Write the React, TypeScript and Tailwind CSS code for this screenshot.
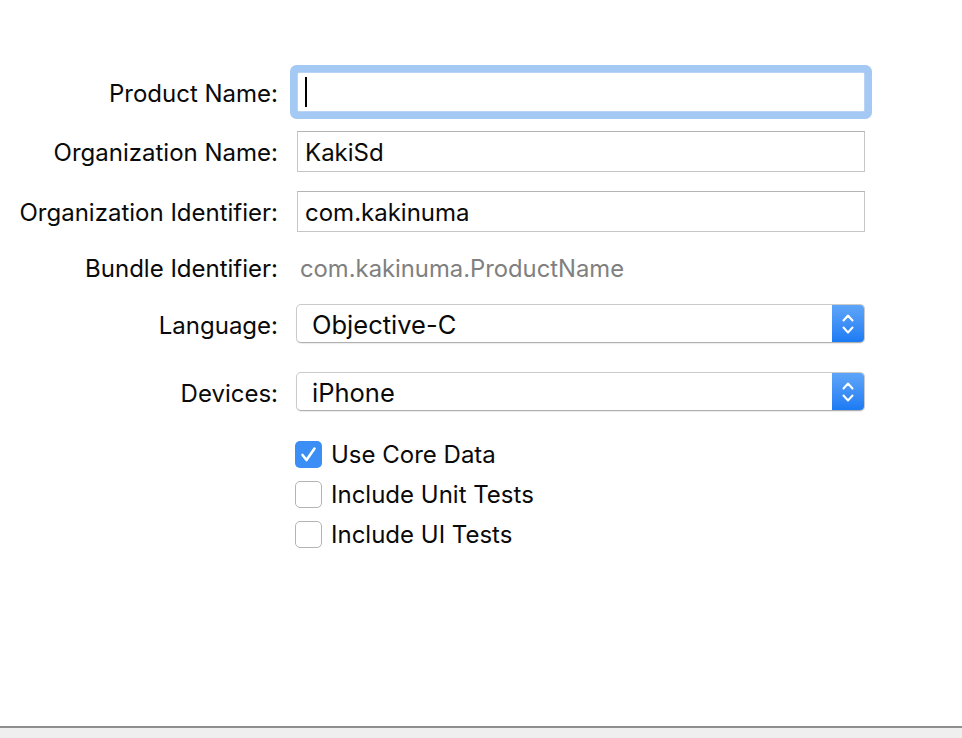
import React from "react";

const font = { fontFamily: "Inter, 'Noto Sans', sans-serif" };

function Label({ children, dy = "pt-[3px]" }: { children: React.ReactNode; dy?: string }) {
  return (
    <div className={"w-[278px] shrink-0 text-right text-[24px] leading-none text-[#0a0a0a] " + dy}>
      {children}
    </div>
  );
}

function TextField({ value, focused }: { value?: string; focused?: boolean }) {
  return (
    <div
      className={
        "ml-[19px] flex h-full w-[568px] items-center border bg-white pl-[7px] pt-[3px] text-[24px] leading-none text-[#0a0a0a] " +
        (focused
          ? "rounded-[2px] border-[#b9d3f2] shadow-[0_0_0_7px_#a3c9f4]"
          : "border-[#c6c6c6] border-t-[#b4b4b4]")
      }
    >
      {focused ? <div className="-mt-[3px] h-[30px] w-[2px] bg-black" /> : value}
    </div>
  );
}

function Popup({ value }: { value: string }) {
  return (
    <div className="ml-[18px] flex h-full w-[569px] items-stretch overflow-hidden rounded-[5px] border border-[#cacaca] border-b-[#b0b0b0] bg-white shadow-[0_1px_1px_rgba(0,0,0,0.08)]">
      <div className="flex flex-1 items-center pl-[15px] pt-[3px] text-[25.5px] leading-none text-[#0a0a0a]">{value}</div>
      <div className="flex w-[32px] items-center justify-center bg-gradient-to-b from-[#5ea5f8] to-[#1a7bf4]">
        <svg width="14" height="24" viewBox="0 0 14 24" fill="none" stroke="white" strokeWidth="2" strokeLinecap="round" strokeLinejoin="round">
          <path d="M2.5 8.5 L7 3.5 L11.5 8.5" />
          <path d="M2.5 15.5 L7 20.5 L11.5 15.5" />
        </svg>
      </div>
    </div>
  );
}

function Check({ label, checked }: { label: string; checked?: boolean }) {
  return (
    <div className="flex h-[40px] items-center">
      <div className="w-[278px] shrink-0" />
      <div
        className={
          "ml-[17px] flex h-[27px] w-[27px] items-center justify-center rounded-[5px] " +
          (checked ? "bg-[#3a8ef6]" : "border border-[#b4b4b4] bg-white")
        }
      >
        {checked && (
          <svg width="19" height="19" viewBox="0 0 19 19" fill="none" stroke="white" strokeWidth="2.6" strokeLinecap="round" strokeLinejoin="round">
            <path d="M3.5 10 L7.5 15 L15.5 3.5" />
          </svg>
        )}
      </div>
      <div className="ml-[9px] pt-[2px] text-[24px] leading-none text-[#0a0a0a]">{label}</div>
    </div>
  );
}

export default function App() {
  return (
    <div className="flex h-[738px] w-[962px] flex-col bg-white" style={font}>
      <div className="flex flex-1 flex-col">
        <div className="mt-[72px] flex h-[40px] items-center">
          <Label>Product Name:</Label>
          <TextField focused />
        </div>
        <div className="mt-[19px] flex h-[41px] items-center">
          <Label>Organization Name:</Label>
          <TextField value="KakiSd" />
        </div>
        <div className="mt-[19px] flex h-[41px] items-center">
          <Label>Organization Identifier:</Label>
          <TextField value="com.kakinuma" />
        </div>
        <div className="mt-[18px] flex h-[36px] items-center">
          <Label dy="pt-[2px]">Bundle Identifier:</Label>
          <div className="ml-[22px] pt-[2px] text-[23.8px] leading-none text-[#808080]">com.kakinuma.ProductName</div>
        </div>
        <div className="mt-[18px] flex h-[39px] items-center">
          <Label dy="pt-[5px]">Language:</Label>
          <Popup value="Objective-C" />
        </div>
        <div className="mt-[29px] flex h-[39px] items-center">
          <Label dy="pt-[5px]">Devices:</Label>
          <Popup value="iPhone" />
        </div>
        <div className="mt-[23px] flex flex-col">
          <Check label="Use Core Data" checked />
          <Check label="Include Unit Tests" />
          <Check label="Include UI Tests" />
        </div>
      </div>
      <div className="h-[12px] border-t-2 border-[#8f8f8f] bg-[#efefef]" />
    </div>
  );
}
